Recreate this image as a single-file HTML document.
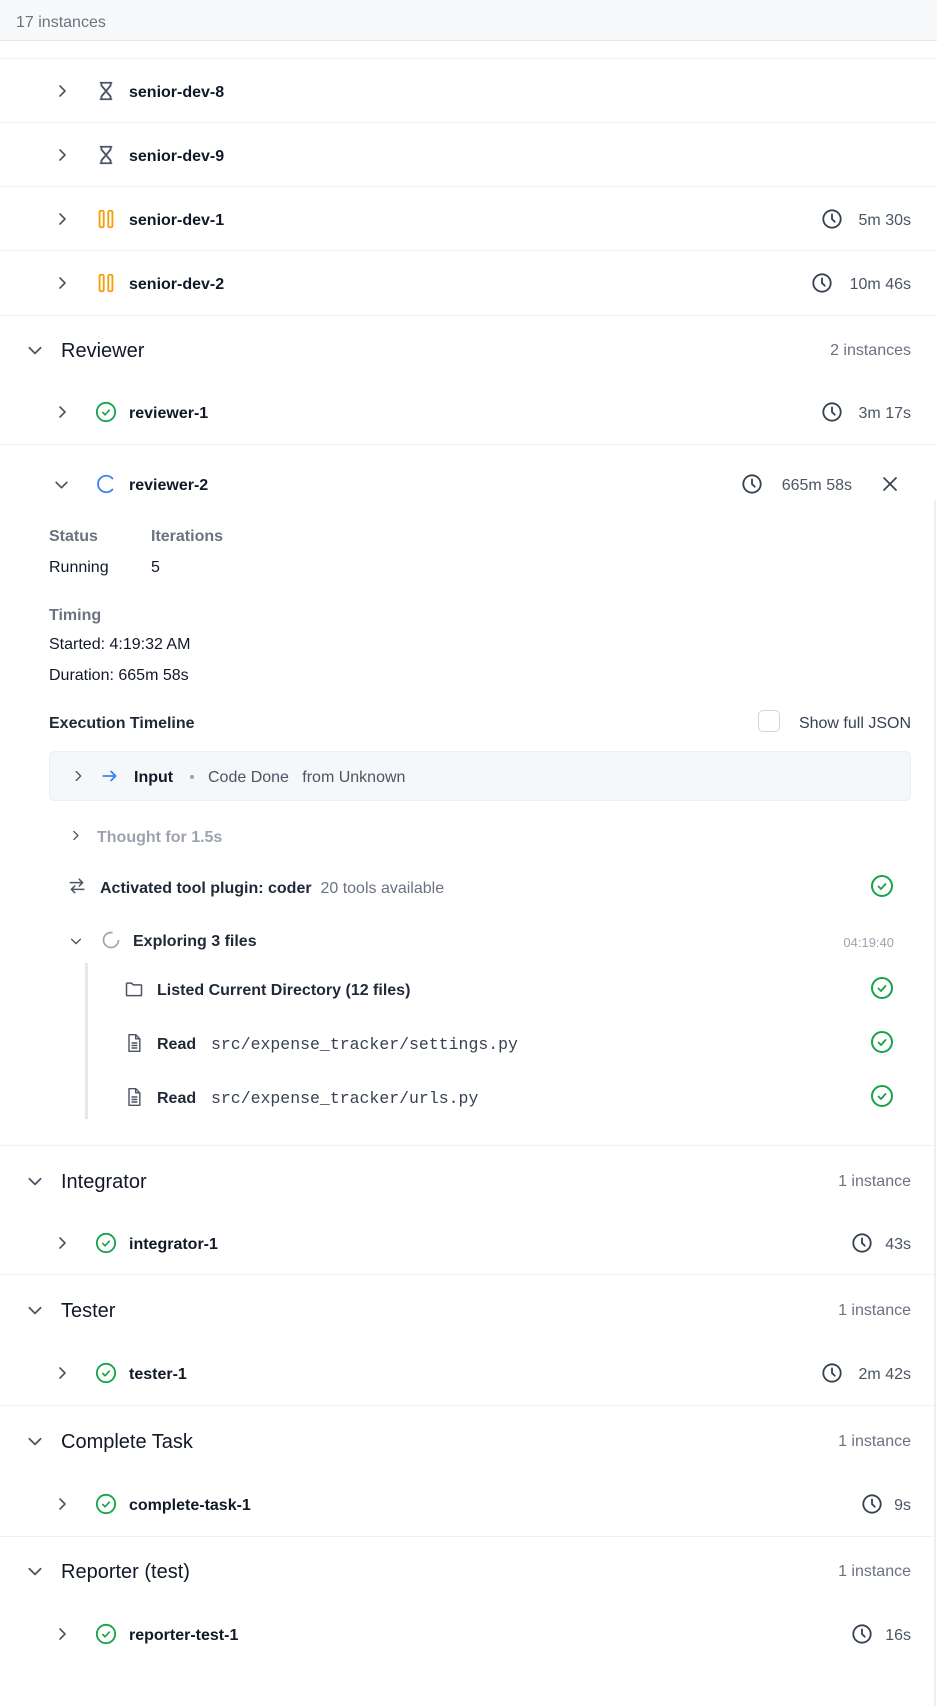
<!DOCTYPE html>
<html><head><meta charset="utf-8"><style>
*{margin:0;padding:0;box-sizing:border-box}
body{width:937px;height:1706px;background:#fff;font-family:"Liberation Sans",sans-serif;color:#111827;position:relative;overflow:hidden}
.a{position:absolute;line-height:22px;white-space:nowrap;margin-top:2px}
.hr{position:absolute;left:0;width:937px;height:1px;background:#f0f1f3}
.nm{font-weight:bold;font-size:16px;color:#111827}
.h{font-size:20px;font-weight:500;color:#111827}
.r{right:26px;font-size:16px;color:#4b5563}
.g{color:#6b7280}
svg{position:absolute}
.mono{font-family:"Liberation Mono",monospace;font-size:16.5px;color:#374151}
</style></head><body>
<div style="position:absolute;left:0;top:0;width:937px;height:41px;background:#f8f9fa;border-bottom:1px solid #e5e7eb"></div>
<div class="a g" style="left:16px;top:10px;font-size:16px">17 instances</div>
<div class="hr" style="top:58px"></div>
<div class="hr" style="top:122px"></div>
<div class="hr" style="top:186px"></div>
<div class="hr" style="top:250px"></div>
<div class="hr" style="top:315px"></div>
<div class="hr" style="top:444px"></div>
<div class="hr" style="top:1145px"></div>
<div class="hr" style="top:1274px"></div>
<div class="hr" style="top:1405px"></div>
<div class="hr" style="top:1536px"></div>
<div style="position:absolute;left:934px;top:500px;width:2px;height:1206px;background:#eceef1"></div>

<svg width="0" height="0"><defs>
<symbol id="cr" viewBox="0 0 16 16"><path d="M6 3l5 5-5 5" fill="none" stroke="#4b5563" stroke-width="1.6" stroke-linecap="round" stroke-linejoin="round"/></symbol>
<symbol id="cd" viewBox="0 0 16 16"><path d="M3 6l5 5 5-5" fill="none" stroke="#4b5563" stroke-width="1.6" stroke-linecap="round" stroke-linejoin="round"/></symbol>
<symbol id="ok" viewBox="0 0 24 24"><circle cx="12" cy="12" r="10" fill="none" stroke="#16a34a" stroke-width="2"/><path d="M8.5 12.5l2.5 2.5 4.5-5" fill="none" stroke="#16a34a" stroke-width="1.8" stroke-linecap="round" stroke-linejoin="round"/></symbol>
<symbol id="clk" viewBox="0 0 24 24"><circle cx="12" cy="12" r="9.5" fill="none" stroke="#374151" stroke-width="2"/><path d="M12 7v5l3 3" fill="none" stroke="#374151" stroke-width="2" stroke-linecap="round"/></symbol>
<symbol id="hg" viewBox="0 0 24 24"><path d="M6 3h12M6 21h12M7 3v3l5 6-5 6v3M17 3v3l-5 6 5 6v3" fill="none" stroke="#4b5563" stroke-width="2" stroke-linecap="round" stroke-linejoin="round"/></symbol>
<symbol id="ps" viewBox="0 0 24 24"><rect x="5" y="3" width="4.5" height="18" rx="1.5" fill="none" stroke="#f59e0b" stroke-width="2"/><rect x="14.5" y="3" width="4.5" height="18" rx="1.5" fill="none" stroke="#f59e0b" stroke-width="2"/></symbol>
<symbol id="doc" viewBox="0 0 24 24"><path d="M6 2h8l5 5v15H6z M14 2v5h5 M9 12h7M9 15h7M9 18h7" fill="none" stroke="#4b5563" stroke-width="1.7" stroke-linejoin="round"/></symbol>
</defs></svg>

<svg style="left:54px;top:83px" width="16" height="16"><use href="#cr"/></svg>
<svg style="left:95px;top:80px" width="22" height="22"><use href="#hg"/></svg>
<div class="a nm" style="left:129px;top:80px">senior-dev-8</div>

<svg style="left:54px;top:147px" width="16" height="16"><use href="#cr"/></svg>
<svg style="left:95px;top:144px" width="22" height="22"><use href="#hg"/></svg>
<div class="a nm" style="left:129px;top:144px">senior-dev-9</div>

<svg style="left:54px;top:211px" width="16" height="16"><use href="#cr"/></svg>
<svg style="left:95px;top:208px" width="22" height="22"><use href="#ps"/></svg>
<div class="a nm" style="left:129px;top:208px">senior-dev-1</div>
<svg style="left:821px;top:208px" width="22" height="22"><use href="#clk"/></svg>
<div class="a r" style="top:208px">5m 30s</div>

<svg style="left:54px;top:275px" width="16" height="16"><use href="#cr"/></svg>
<svg style="left:95px;top:272px" width="22" height="22"><use href="#ps"/></svg>
<div class="a nm" style="left:129px;top:272px">senior-dev-2</div>
<svg style="left:811px;top:272px" width="22" height="22"><use href="#clk"/></svg>
<div class="a r" style="top:272px">10m 46s</div>

<svg style="left:26px;top:341px" width="18" height="18"><use href="#cd"/></svg>
<div class="a h" style="left:61px;top:338px">Reviewer</div>
<div class="a r g" style="top:338px">2 instances</div>

<svg style="left:54px;top:404px" width="16" height="16"><use href="#cr"/></svg>
<svg style="left:95px;top:401px" width="22" height="22"><use href="#ok"/></svg>
<div class="a nm" style="left:129px;top:401px">reviewer-1</div>
<svg style="left:821px;top:401px" width="22" height="22"><use href="#clk"/></svg>
<div class="a r" style="top:401px">3m 17s</div>

<svg style="left:53px;top:476px" width="17" height="17"><use href="#cd"/></svg>
<svg style="left:95px;top:473px" width="22" height="22" viewBox="0 0 24 24"><path d="M19 6A9 9 0 1 0 19 18" fill="none" stroke="#3b82f6" stroke-width="2" stroke-linecap="round"/></svg>
<div class="a nm" style="left:129px;top:473px">reviewer-2</div>
<svg style="left:741px;top:473px" width="22" height="22"><use href="#clk"/></svg>
<div class="a r" style="right:85px;top:473px">665m 58s</div>
<svg style="left:882px;top:476px" width="16" height="16" viewBox="0 0 16 16"><path d="M2 2l12 12M14 2L2 14" stroke="#374151" stroke-width="1.7" stroke-linecap="round"/></svg>

<div class="a g" style="left:49px;top:524px;font-size:16px;font-weight:bold;color:#6b7280">Status</div>
<div class="a g" style="left:151px;top:524px;font-size:16px;font-weight:bold;color:#6b7280">Iterations</div>
<div class="a" style="left:49px;top:555px;font-size:16px">Running</div>
<div class="a" style="left:151px;top:555px;font-size:16px">5</div>
<div class="a" style="left:49px;top:603px;font-size:16px;font-weight:bold;color:#6b7280">Timing</div>
<div class="a" style="left:49px;top:632px;font-size:16px">Started: 4:19:32 AM</div>
<div class="a" style="left:49px;top:663px;font-size:16px">Duration: 665m 58s</div>
<div class="a" style="left:49px;top:711px;font-size:16px;font-weight:bold;color:#1f2937">Execution Timeline</div>
<div style="position:absolute;left:758px;top:710px;width:22px;height:22px;border:1.5px solid #d1d5db;border-radius:5px"></div>
<div class="a" style="right:26px;top:711px;font-size:16px;color:#374151">Show full JSON</div>

<div style="position:absolute;left:49px;top:751px;width:862px;height:50px;background:#f6f7f9;border:1px solid #eceef1;border-radius:6px"></div>
<svg style="left:71px;top:769px" width="14" height="14"><use href="#cr"/></svg>
<svg style="left:101px;top:767px" width="18" height="18" viewBox="0 0 16 16"><path d="M2 8h11M9 4l4 4-4 4" fill="none" stroke="#3b82f6" stroke-width="1.6" stroke-linecap="round" stroke-linejoin="round"/></svg>
<div class="a" style="left:134px;top:765px;font-size:16px;font-weight:bold">Input</div>
<div style="position:absolute;left:190px;top:775px;width:4px;height:4px;border-radius:2px;background:#9ca3af"></div>
<div class="a" style="left:208px;top:765px;font-size:16px;color:#4b5563">Code Done&nbsp;&nbsp;&nbsp;from Unknown</div>

<svg style="left:69px;top:829px" width="13" height="13"><use href="#cr"/></svg>
<div class="a" style="left:97px;top:825px;font-size:16px;font-weight:bold;color:#9ca3af">Thought for 1.5s</div>

<svg style="left:68px;top:877px" width="18" height="18" viewBox="0 0 16 16"><path d="M2 5h11M10 2l3 3-3 3M14 11H3M6 8l-3 3 3 3" fill="none" stroke="#4b5563" stroke-width="1.4" stroke-linecap="round" stroke-linejoin="round"/></svg>
<div class="a" style="left:100px;top:876px;font-size:16px;font-weight:bold;color:#1f2937">Activated tool plugin: coder&nbsp;&nbsp;<span style="font-weight:normal;color:#6b7280">20 tools available</span></div>
<svg style="left:870px;top:874px" width="24" height="24"><use href="#ok"/></svg>

<svg style="left:69px;top:934px" width="14" height="14"><use href="#cd"/></svg>
<svg style="left:101px;top:930px" width="20" height="20" viewBox="0 0 24 24"><circle cx="12" cy="12" r="9" fill="none" stroke="#9ca3af" stroke-width="2" stroke-dasharray="44 13"/></svg>
<div class="a" style="left:133px;top:929px;font-size:16px;font-weight:bold;color:#1f2937">Exploring 3 files</div>
<div class="a" style="right:43px;top:930px;font-size:13px;color:#9ca3af">04:19:40</div>
<div style="position:absolute;left:85px;top:963px;width:3px;height:156px;background:#e5e7eb"></div>

<svg style="left:124px;top:979px" width="20" height="20" viewBox="0 0 24 24"><path d="M3 6a1 1 0 0 1 1-1h5l2 2h9a1 1 0 0 1 1 1v11a1 1 0 0 1-1 1H4a1 1 0 0 1-1-1z" fill="none" stroke="#4b5563" stroke-width="1.8" stroke-linejoin="round"/></svg>
<div class="a" style="left:157px;top:978px;font-size:16px;font-weight:bold;color:#1f2937">Listed Current Directory (12 files)</div>
<svg style="left:870px;top:976px" width="24" height="24"><use href="#ok"/></svg>

<svg style="left:124px;top:1033px" width="20" height="20"><use href="#doc"/></svg>
<div class="a" style="left:157px;top:1032px;font-size:16px;font-weight:bold;color:#1f2937">Read</div>
<div class="a mono" style="left:211px;top:1032px">src/expense_tracker/settings.py</div>
<svg style="left:870px;top:1030px" width="24" height="24"><use href="#ok"/></svg>

<svg style="left:124px;top:1087px" width="20" height="20"><use href="#doc"/></svg>
<div class="a" style="left:157px;top:1086px;font-size:16px;font-weight:bold;color:#1f2937">Read</div>
<div class="a mono" style="left:211px;top:1086px">src/expense_tracker/urls.py</div>
<svg style="left:870px;top:1084px" width="24" height="24"><use href="#ok"/></svg>

<svg style="left:26px;top:1172px" width="18" height="18"><use href="#cd"/></svg>
<div class="a h" style="left:61px;top:1169px">Integrator</div>
<div class="a r g" style="top:1169px">1 instance</div>
<svg style="left:54px;top:1235px" width="16" height="16"><use href="#cr"/></svg>
<svg style="left:95px;top:1232px" width="22" height="22"><use href="#ok"/></svg>
<div class="a nm" style="left:129px;top:1232px">integrator-1</div>
<svg style="left:851px;top:1232px" width="22" height="22"><use href="#clk"/></svg>
<div class="a r" style="top:1232px">43s</div>

<svg style="left:26px;top:1301px" width="18" height="18"><use href="#cd"/></svg>
<div class="a h" style="left:61px;top:1298px">Tester</div>
<div class="a r g" style="top:1298px">1 instance</div>
<svg style="left:54px;top:1365px" width="16" height="16"><use href="#cr"/></svg>
<svg style="left:95px;top:1362px" width="22" height="22"><use href="#ok"/></svg>
<div class="a nm" style="left:129px;top:1362px">tester-1</div>
<svg style="left:821px;top:1362px" width="22" height="22"><use href="#clk"/></svg>
<div class="a r" style="top:1362px">2m 42s</div>

<svg style="left:26px;top:1432px" width="18" height="18"><use href="#cd"/></svg>
<div class="a h" style="left:61px;top:1429px">Complete Task</div>
<div class="a r g" style="top:1429px">1 instance</div>
<svg style="left:54px;top:1496px" width="16" height="16"><use href="#cr"/></svg>
<svg style="left:95px;top:1493px" width="22" height="22"><use href="#ok"/></svg>
<div class="a nm" style="left:129px;top:1493px">complete-task-1</div>
<svg style="left:861px;top:1493px" width="22" height="22"><use href="#clk"/></svg>
<div class="a r" style="top:1493px">9s</div>

<svg style="left:26px;top:1562px" width="18" height="18"><use href="#cd"/></svg>
<div class="a h" style="left:61px;top:1559px">Reporter (test)</div>
<div class="a r g" style="top:1559px">1 instance</div>
<svg style="left:54px;top:1626px" width="16" height="16"><use href="#cr"/></svg>
<svg style="left:95px;top:1623px" width="22" height="22"><use href="#ok"/></svg>
<div class="a nm" style="left:129px;top:1623px">reporter-test-1</div>
<svg style="left:851px;top:1623px" width="22" height="22"><use href="#clk"/></svg>
<div class="a r" style="top:1623px">16s</div>
</body></html>
